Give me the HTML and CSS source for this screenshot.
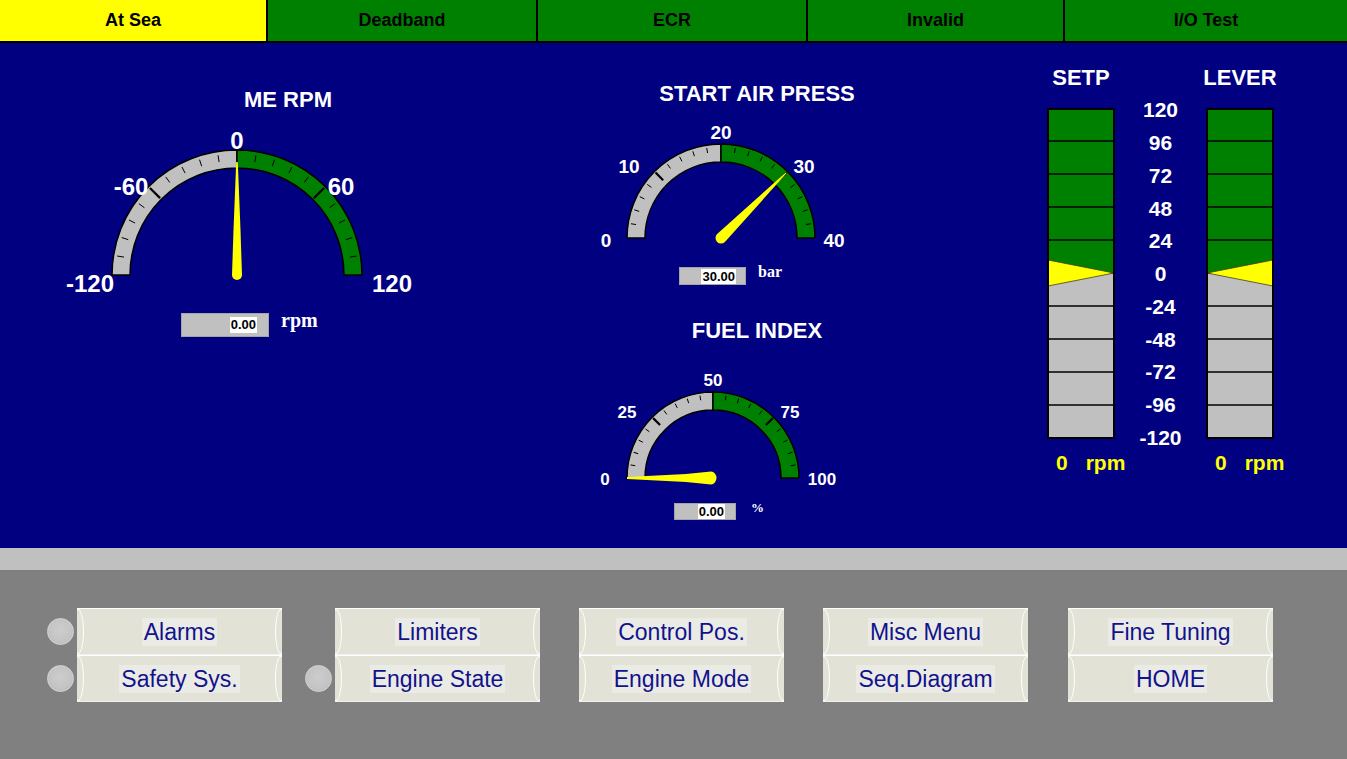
FILE: index.html
```html
<!DOCTYPE html>
<html>
<head>
<meta charset="utf-8">
<title>Engine Overview</title>
<link rel="stylesheet" href="styles.css">
</head>
<body>
<nav class="tabs">
  <div class="tab tab-sea">At Sea</div>
  <div class="tab tab-dead">Deadband</div>
  <div class="tab tab-ecr">ECR</div>
  <div class="tab tab-inv">Invalid</div>
  <div class="tab tab-io">I/O Test</div>
</nav>

<main class="panel">
  <section class="rpm-card">
    <h2 class="g-title">ME RPM</h2>
    <svg class="dial dial-rpm" width="576" height="188" viewBox="0 0 576 188">
      <defs>
        <g id="tk" stroke="#000">
          <line y1="-0.97" y2="-0.915" stroke-width="1" vector-effect="non-scaling-stroke" transform="rotate(-81)"/>
          <line y1="-0.97" y2="-0.915" stroke-width="1" vector-effect="non-scaling-stroke" transform="rotate(-72)"/>
          <line y1="-0.97" y2="-0.915" stroke-width="1" vector-effect="non-scaling-stroke" transform="rotate(-63)"/>
          <line y1="-0.97" y2="-0.915" stroke-width="1" vector-effect="non-scaling-stroke" transform="rotate(-54)"/>
          <line y1="-0.97" y2="-0.915" stroke-width="1" vector-effect="non-scaling-stroke" transform="rotate(-36)"/>
          <line y1="-0.97" y2="-0.915" stroke-width="1" vector-effect="non-scaling-stroke" transform="rotate(-27)"/>
          <line y1="-0.97" y2="-0.915" stroke-width="1" vector-effect="non-scaling-stroke" transform="rotate(-18)"/>
          <line y1="-0.97" y2="-0.915" stroke-width="1" vector-effect="non-scaling-stroke" transform="rotate(-9)"/>
          <line y1="-0.97" y2="-0.915" stroke-width="1" vector-effect="non-scaling-stroke" transform="rotate(9)"/>
          <line y1="-0.97" y2="-0.915" stroke-width="1" vector-effect="non-scaling-stroke" transform="rotate(18)"/>
          <line y1="-0.97" y2="-0.915" stroke-width="1" vector-effect="non-scaling-stroke" transform="rotate(27)"/>
          <line y1="-0.97" y2="-0.915" stroke-width="1" vector-effect="non-scaling-stroke" transform="rotate(36)"/>
          <line y1="-0.97" y2="-0.915" stroke-width="1" vector-effect="non-scaling-stroke" transform="rotate(54)"/>
          <line y1="-0.97" y2="-0.915" stroke-width="1" vector-effect="non-scaling-stroke" transform="rotate(63)"/>
          <line y1="-0.97" y2="-0.915" stroke-width="1" vector-effect="non-scaling-stroke" transform="rotate(72)"/>
          <line y1="-0.97" y2="-0.915" stroke-width="1" vector-effect="non-scaling-stroke" transform="rotate(81)"/>
          <line y1="-0.985" y2="-0.87" stroke-width="2.2" vector-effect="non-scaling-stroke" transform="rotate(-45)"/>
          <line y1="-0.985" y2="-0.87" stroke-width="2.2" vector-effect="non-scaling-stroke" transform="rotate(45)"/>
        </g>
      </defs>
      <path class="arc-gray" d="M112,163 A125,125 0 0 1 237,38 L237,56 A107,107 0 0 0 130,163 Z"/>
      <path class="arc-green" d="M237,38 A125,125 0 0 1 362,163 L344,163 A107,107 0 0 0 237,56 Z"/>
      <use href="#tk" transform="translate(237 163) scale(125)"/>
      <path class="needle" transform="translate(237 163)" d="M-0.8,-113 L0.8,-113 L3.5,-45 L5,0 A5,5 0 0 1 -5,0 L-3.5,-45 Z"/>
      <text x="237" y="37">0</text>
      <text x="131" y="83">-60</text>
      <text x="341" y="83">60</text>
      <text x="90" y="180">-120</text>
      <text x="392" y="180">120</text>
    </svg>
    <div class="readout readout-rpm">
      <div class="vbox vbox-rpm"><span>0.00</span></div>
      <span class="unit unit-rpm">rpm</span>
    </div>
  </section>

  <section class="mid-col">
    <div class="gauge gauge-air">
      <h2 class="g-title">START AIR PRESS</h2>
      <svg class="dial dial-air" width="362" height="156" viewBox="0 0 362 156">
        <path class="arc-gray" d="M51,132 A94,94 0 0 1 145,38 L145,56 A76,76 0 0 0 69,132 Z"/>
        <path class="arc-green" d="M145,38 A94,94 0 0 1 239,132 L221,132 A76,76 0 0 0 145,56 Z"/>
        <use href="#tk" transform="translate(145 132) scale(94)"/>
        <path class="needle" transform="translate(145 132) rotate(45)" d="M-0.6,-92 L0.6,-92 L5.5,0 A5.5,5.5 0 0 1 -5.5,0 Z"/>
        <text x="145" y="33">20</text>
        <text x="53" y="67">10</text>
        <text x="228" y="67">30</text>
        <text x="30" y="141">0</text>
        <text x="258" y="141">40</text>
      </svg>
      <div class="readout readout-air">
        <div class="vbox vbox-air"><span>30.00</span></div>
        <span class="unit unit-bar">bar</span>
      </div>
    </div>

    <div class="gauge gauge-fuel">
      <h2 class="g-title">FUEL INDEX</h2>
      <svg class="dial dial-fuel" width="362" height="155" viewBox="0 0 362 155">
        <path class="arc-gray" d="M51,135 A86,86 0 0 1 137,49 L137,67 A68,68 0 0 0 69,135 Z"/>
        <path class="arc-green" d="M137,49 A86,86 0 0 1 223,135 L205,135 A68,68 0 0 0 137,67 Z"/>
        <use href="#tk" transform="translate(137 135) scale(86)"/>
        <path class="needle" transform="translate(135 135) rotate(-90)" d="M-1,-84 L1,-84 L4,-25 L6.5,0 A6.5,5.5 0 0 1 -6.5,0 L-4,-25 Z"/>
        <text x="137" y="43">50</text>
        <text x="51" y="75">25</text>
        <text x="214" y="75">75</text>
        <text x="29" y="142">0</text>
        <text x="246" y="142">100</text>
      </svg>
      <div class="readout readout-fuel">
        <div class="vbox vbox-fuel"><span>0.00</span></div>
        <span class="unit unit-pct">%</span>
      </div>
    </div>
  </section>

  <section class="bars">
    <div class="bar-col">
      <h2 class="bar-title">SETP</h2>
      <svg class="bar-svg" width="68" height="331" viewBox="0 0 68 331">
        <rect x="1" y="1" width="66" height="164" fill="#008000"/>
        <rect x="1" y="165" width="66" height="165" fill="#c0c0c0"/>
        <g stroke="#000" stroke-width="1.6">
          <line x1="1" x2="67" y1="33" y2="33"/>
          <line x1="1" x2="67" y1="66" y2="66"/>
          <line x1="1" x2="67" y1="99" y2="99"/>
          <line x1="1" x2="67" y1="132" y2="132"/>
          <line x1="1" x2="67" y1="165" y2="165"/>
          <line x1="1" x2="67" y1="198" y2="198"/>
          <line x1="1" x2="67" y1="231" y2="231"/>
          <line x1="1" x2="67" y1="264" y2="264"/>
          <line x1="1" x2="67" y1="297" y2="297"/>
        </g>
        <polygon points="1,152 1,178 67,165" fill="#ffff00" stroke="#404020" stroke-width="0.8"/>
        <rect x="1" y="1" width="66" height="329" fill="none" stroke="#000" stroke-width="2"/>
      </svg>
      <div class="bar-readout"><span>0</span><span>rpm</span></div>
    </div>

    <div class="scale">
      <span>120</span><span>96</span><span>72</span><span>48</span><span>24</span><span>0</span>
      <span>-24</span><span>-48</span><span>-72</span><span>-96</span><span>-120</span>
    </div>

    <div class="bar-col">
      <h2 class="bar-title">LEVER</h2>
      <svg class="bar-svg" width="68" height="331" viewBox="0 0 68 331">
        <rect x="1" y="1" width="66" height="164" fill="#008000"/>
        <rect x="1" y="165" width="66" height="165" fill="#c0c0c0"/>
        <g stroke="#000" stroke-width="1.6">
          <line x1="1" x2="67" y1="33" y2="33"/>
          <line x1="1" x2="67" y1="66" y2="66"/>
          <line x1="1" x2="67" y1="99" y2="99"/>
          <line x1="1" x2="67" y1="132" y2="132"/>
          <line x1="1" x2="67" y1="165" y2="165"/>
          <line x1="1" x2="67" y1="198" y2="198"/>
          <line x1="1" x2="67" y1="231" y2="231"/>
          <line x1="1" x2="67" y1="264" y2="264"/>
          <line x1="1" x2="67" y1="297" y2="297"/>
        </g>
        <polygon points="67,152 67,178 1,165" fill="#ffff00" stroke="#404020" stroke-width="0.8"/>
        <rect x="1" y="1" width="66" height="329" fill="none" stroke="#000" stroke-width="2"/>
      </svg>
      <div class="bar-readout"><span>0</span><span>rpm</span></div>
    </div>
  </section>
</main>

<div class="band"></div>

<footer class="nav">
  <div class="group">
    <div class="leds">
      <div class="led-slot"><span class="led"></span></div>
      <div class="led-slot"><span class="led"></span></div>
    </div>
    <div class="btns">
      <div class="btn"><span>Alarms</span></div>
      <div class="btn"><span>Safety Sys.</span></div>
    </div>
  </div>
  <div class="group group-2">
    <div class="leds">
      <div class="led-slot"></div>
      <div class="led-slot"><span class="led"></span></div>
    </div>
    <div class="btns">
      <div class="btn"><span>Limiters</span></div>
      <div class="btn"><span>Engine State</span></div>
    </div>
  </div>
  <div class="group group-3">
    <div class="btns">
      <div class="btn"><span>Control Pos.</span></div>
      <div class="btn"><span>Engine Mode</span></div>
    </div>
  </div>
  <div class="group group-4">
    <div class="btns">
      <div class="btn"><span>Misc Menu</span></div>
      <div class="btn"><span>Seq.Diagram</span></div>
    </div>
  </div>
  <div class="group group-5">
    <div class="btns">
      <div class="btn"><span>Fine Tuning</span></div>
      <div class="btn"><span>HOME</span></div>
    </div>
  </div>
</footer>
</body>
</html>
```

FILE: styles.css
```css
* { box-sizing: border-box; }

html, body {
  margin: 0;
  padding: 0;
  width: 1347px;
  height: 759px;
  overflow: hidden;
  font-family: "Liberation Sans", Arial, sans-serif;
  background: #808080;
}

/* ---------- top tabs ---------- */
.tabs {
  display: flex;
  height: 43px;
  border-bottom: 2px solid #000;
}
.tab {
  display: flex;
  align-items: center;
  justify-content: center;
  background: #008000;
  color: #000;
  font-weight: bold;
  font-size: 18px;
  border-left: 2px solid #000;
}
.tab-sea { width: 266px; background: #ffff00; border-left: 0; }
.tab-dead { width: 270px; }
.tab-ecr { width: 270px; }
.tab-inv { width: 257px; }
.tab-io { flex: 1; }

/* ---------- main navy panel ---------- */
.panel {
  display: flex;
  height: 505px;
  background: #000080;
  color: #fff;
}

.g-title {
  margin: 0;
  font-size: 22px;
  line-height: 24px;
  font-weight: bold;
  text-align: center;
  color: #fff;
}

.dial { display: block; }
.dial text {
  fill: #fff;
  font-family: "Liberation Sans", Arial, sans-serif;
  font-weight: bold;
  text-anchor: middle;
}
.dial-rpm text { font-size: 24px; }
.dial-air text { font-size: 19px; }
.dial-fuel text { font-size: 17px; }

.arc-gray { fill: #c0c0c0; stroke: #000; stroke-width: 1.5; }
.arc-green { fill: #008000; stroke: #000; stroke-width: 1.5; }
.needle { fill: #ffff00; }

.rpm-card {
  width: 576px;
  padding-top: 45px;
  display: flex;
  flex-direction: column;
}

.readout {
  display: flex;
  align-items: flex-start;
}
.vbox {
  flex: none;
  display: flex;
  justify-content: flex-end;
  align-items: center;
  background: #c0c0c0;
  border: 1px solid #a4a4a4;
}
.vbox span {
  background: #fff;
  color: #000;
  font-weight: bold;
  font-size: 13px;
  line-height: 16px;
  padding: 0 1px;
}
.unit {
  font-family: "Liberation Serif", "Times New Roman", serif;
  font-weight: bold;
  color: #fff;
  line-height: 1;
}

.readout-rpm { margin-top: 13px; padding-left: 181px; gap: 12px; height: 24px; }
.vbox-rpm { width: 88px; height: 24px; padding-right: 11px; }
.unit-rpm { font-size: 20px; margin-top: -3px; }

.mid-col {
  width: 362px;
  padding-top: 39px;
  display: flex;
  flex-direction: column;
}
.gauge { display: flex; flex-direction: column; }
.gauge-fuel { margin-top: 34px; }

.readout-air { margin-top: 5px; padding-left: 103px; gap: 12px; height: 18px; }
.vbox-air { width: 67px; height: 18px; padding-right: 9px; }
.unit-bar { font-size: 16px; margin-top: -3px; }

.readout-fuel { margin-top: 5px; padding-left: 98px; gap: 15px; height: 17px; }
.vbox-fuel { width: 62px; height: 17px; padding-right: 10px; }
.vbox-fuel span, .vbox-air span { line-height: 15px; }
.unit-pct { font-size: 13px; margin-top: -2px; }

/* ---------- bars ---------- */
.bars {
  display: flex;
  margin-left: 109px;
  padding-top: 23px;
}
.bar-col {
  width: 68px;
  display: flex;
  flex-direction: column;
  align-items: center;
}
.bar-title {
  margin: 0;
  font-size: 22px;
  line-height: 24px;
  font-weight: bold;
  color: #fff;
  white-space: nowrap;
}
.bar-svg { display: block; margin-top: 18px; }
.bar-readout {
  align-self: stretch;
  display: flex;
  gap: 18px;
  padding-left: 9px;
  margin-top: 12px;
  font-size: 21px;
  line-height: 24px;
  font-weight: bold;
  color: #ffff00;
  white-space: nowrap;
}

.scale {
  width: 91px;
  padding-top: 28px;
  display: flex;
  flex-direction: column;
  align-items: center;
}
.scale span {
  height: 32.75px;
  display: flex;
  align-items: center;
  font-size: 21px;
  font-weight: bold;
  color: #fff;
}

/* ---------- lower area ---------- */
.band {
  height: 22px;
  background: #c0c0c0;
}

.nav {
  display: flex;
  align-items: flex-start;
  height: 189px;
  padding: 38px 0 0 47px;
  background: #808080;
}
.group { display: flex; }
.group-2 { margin-left: 23px; }
.group-3 { margin-left: 39px; }
.group-4 { margin-left: 39px; }
.group-5 { margin-left: 40px; }

.leds {
  width: 27px;
  margin-right: 3px;
  display: flex;
  flex-direction: column;
}
.led-slot {
  height: 47px;
  display: flex;
  align-items: center;
}
.led {
  display: block;
  width: 27px;
  height: 27px;
  border-radius: 50%;
  background: radial-gradient(circle at 50% 45%, #cdcdcd 0%, #c4c4c4 60%, #b0b0b0 100%);
  border: 1px solid #d6d6d6;
}

.btns {
  width: 205px;
  display: flex;
  flex-direction: column;
}
.btn {
  position: relative;
  overflow: hidden;
  height: 47px;
  display: flex;
  align-items: center;
  justify-content: center;
  background: #e2e2d6;
  border-top: 1px solid #fff;
  border-bottom: 1px solid #f2f2f2;
}
.btn::before,
.btn::after {
  content: "";
  position: absolute;
  top: 0;
  bottom: 0;
  width: 10px;
  border: 1px solid #fff;
  border-radius: 50%;
}
.btn::before { left: -5px; }
.btn::after { right: -5px; }
.btn span {
  font-size: 23px;
  line-height: 28px;
  color: #12128c;
  background: #ebebe6;
  padding: 0 2px;
}
```
